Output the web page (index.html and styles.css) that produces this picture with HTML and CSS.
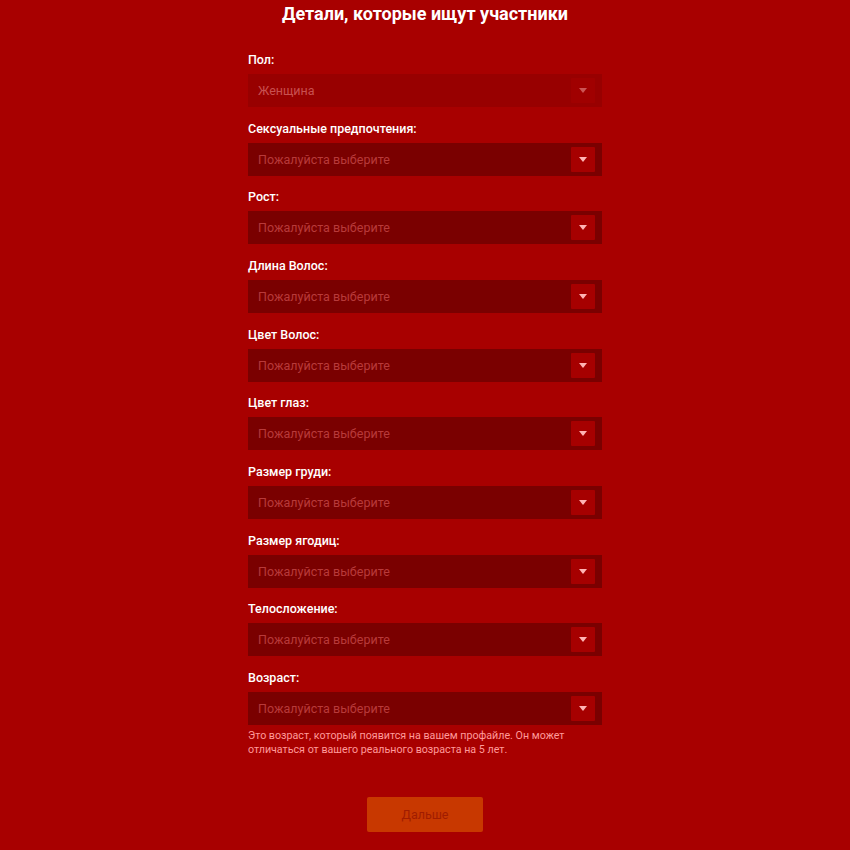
FILE: index.html
```html
<!DOCTYPE html>
<html lang="ru">
<head>
<meta charset="utf-8">
<link rel="stylesheet" href="styles.css">
</head>
<body>
<main class="page">
  <h1 class="title">Детали, которые ищут участники</h1>
  <form class="form">
    <div class="field">
      <div class="label">Пол:</div>
      <div class="select disabled"><span class="value">Женщина</span><span class="arrow-btn"><span class="arrow"></span></span></div>
    </div>
    <div class="field">
      <div class="label">Сексуальные предпочтения:</div>
      <div class="select"><span class="value">Пожалуйста выберите</span><span class="arrow-btn"><span class="arrow"></span></span></div>
    </div>
    <div class="field">
      <div class="label">Рост:</div>
      <div class="select"><span class="value">Пожалуйста выберите</span><span class="arrow-btn"><span class="arrow"></span></span></div>
    </div>
    <div class="field">
      <div class="label">Длина Волос:</div>
      <div class="select"><span class="value">Пожалуйста выберите</span><span class="arrow-btn"><span class="arrow"></span></span></div>
    </div>
    <div class="field">
      <div class="label">Цвет Волос:</div>
      <div class="select"><span class="value">Пожалуйста выберите</span><span class="arrow-btn"><span class="arrow"></span></span></div>
    </div>
    <div class="field">
      <div class="label">Цвет глаз:</div>
      <div class="select"><span class="value">Пожалуйста выберите</span><span class="arrow-btn"><span class="arrow"></span></span></div>
    </div>
    <div class="field">
      <div class="label">Размер груди:</div>
      <div class="select"><span class="value">Пожалуйста выберите</span><span class="arrow-btn"><span class="arrow"></span></span></div>
    </div>
    <div class="field">
      <div class="label">Размер ягодиц:</div>
      <div class="select"><span class="value">Пожалуйста выберите</span><span class="arrow-btn"><span class="arrow"></span></span></div>
    </div>
    <div class="field">
      <div class="label">Телосложение:</div>
      <div class="select"><span class="value">Пожалуйста выберите</span><span class="arrow-btn"><span class="arrow"></span></span></div>
    </div>
    <div class="field last">
      <div class="label">Возраст:</div>
      <div class="select"><span class="value">Пожалуйста выберите</span><span class="arrow-btn"><span class="arrow"></span></span></div>
      <p class="hint">Это возраст, который появится на вашем профайле. Он может отличаться от вашего реального возраста на 5 лет.</p>
    </div>
    <div class="actions">
      <button type="button" class="next">Дальше</button>
    </div>
  </form>
</main>
</body>
</html>
```

FILE: styles.css
```css
html, body {
  margin: 0;
  padding: 0;
  background: #a80000;
}
body {
  font-family: Roboto, "Liberation Sans", Arial, sans-serif;
  color: #ffffff;
}
.page {
  width: 354px;
  margin: 0 auto;
  padding-top: 2px;
}
.title {
  margin: 0 -60px 25px;
  font-size: 18px;
  line-height: 24px;
  font-weight: 700;
  text-align: center;
  color: #ffffff;
}
.form {
  display: flex;
  flex-direction: column;
}
.field {
  height: 68.67px;
  display: flex;
  flex-direction: column;
}
.field.last {
  height: auto;
}
.label {
  font-size: 12.5px;
  line-height: 18px;
  font-weight: 500;
  margin-bottom: 5px;
  color: #ffffff;
}
.select {
  height: 33px;
  box-sizing: border-box;
  background: #7a0000;
  display: flex;
  align-items: center;
  justify-content: space-between;
  padding: 0 7px 0 10px;
}
.select.disabled {
  background: #980000;
}
.value {
  font-size: 12.5px;
  color: #b83a3a;
}
.select.disabled .value {
  color: #c85050;
}
.arrow-btn {
  width: 24px;
  height: 25px;
  background: #a60000;
  border-radius: 1px;
  display: flex;
  align-items: center;
  justify-content: center;
}
.arrow {
  width: 0;
  height: 0;
  border-left: 4.5px solid transparent;
  border-right: 4.5px solid transparent;
  border-top: 5px solid #ffb4b4;
}
.select.disabled .arrow-btn {
  background: #a00000;
}
.select.disabled .arrow {
  border-top-color: #cc5555;
}
.hint {
  margin: 4px 0 0;
  font-size: 10.7px;
  line-height: 14px;
  color: #ff9a9a;
}
.actions {
  display: flex;
  justify-content: center;
  margin-top: 40px;
}
.next {
  width: 116px;
  height: 35px;
  border: none;
  border-radius: 2px;
  background: #c83800;
  color: #a01c00;
  font-family: Roboto, "Liberation Sans", Arial, sans-serif;
  font-size: 12.5px;
  font-weight: 400;
  cursor: default;
}
```
